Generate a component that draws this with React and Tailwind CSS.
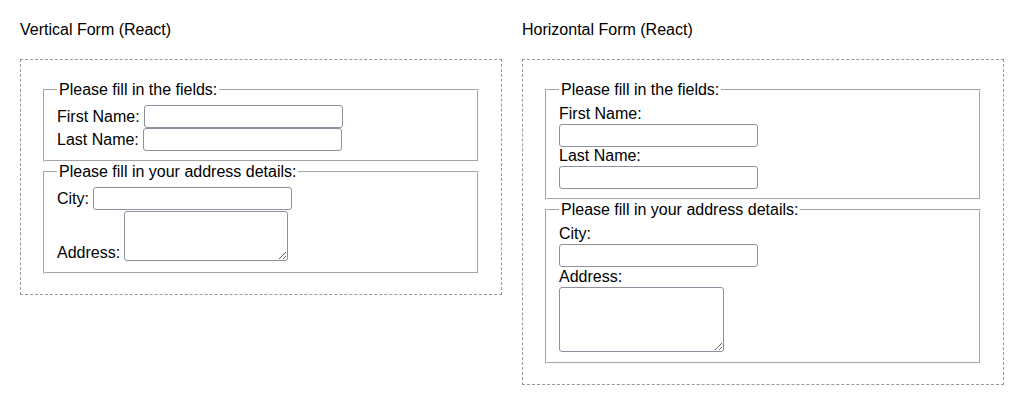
import React from "react";

const inputCls =
  "w-[199px] h-[23px] border border-[#8f8f9d] rounded-[3px] bg-white px-[2px] outline-none";
const areaCls =
  "w-[164px] border border-[#8f8f9d] rounded-[3px] bg-white px-[2px] outline-none";
const fieldsetCls =
  "mx-[2px] border-2 [border-style:groove] border-[#fafafa] px-3";

function VerticalForm() {
  return (
    <div className="border border-dashed border-[#999] p-5">
      <fieldset className={`${fieldsetCls} pb-[9px]`}>
        <legend className="px-[2px] leading-[19px]">Please fill in the fields:</legend>
        <div className="pt-[6px]">
          <div className="flex items-center h-[23px]">
            <label className="mr-[4px]">First Name:</label>
            <input type="text" className={inputCls} />
          </div>
          <div className="flex items-center h-[23px]">
            <label className="mr-[4px]">Last Name:</label>
            <input type="text" className={inputCls} />
          </div>
        </div>
      </fieldset>
      <fieldset className={`${fieldsetCls} pb-[11px]`}>
        <legend className="px-[2px] leading-[19px]">Please fill in your address details:</legend>
        <div className="pt-[6px]">
          <div className="flex items-start h-[24px]">
            <label className="mr-[4px] leading-[23px]">City:</label>
            <input type="text" className={inputCls} />
          </div>
          <div className="flex items-end">
            <label className="mr-[4px] leading-[18px] mb-[-1px]">Address:</label>
            <textarea className={`${areaCls} h-[50px] block`} />
          </div>
        </div>
      </fieldset>
    </div>
  );
}

function HorizontalForm() {
  return (
    <div className="border border-dashed border-[#999] p-5">
      <fieldset className={`${fieldsetCls} pb-[9px]`}>
        <legend className="px-[2px] leading-[19px]">Please fill in the fields:</legend>
        <div className="pt-[6px]">
          <label className="block leading-[18px]">First Name:</label>
          <input type="text" className={`${inputCls} block mt-[1px]`} />
          <label className="block leading-[18px]">Last Name:</label>
          <input type="text" className={`${inputCls} block mt-[1px]`} />
        </div>
      </fieldset>
      <fieldset className={`${fieldsetCls} pb-[10px]`}>
        <legend className="px-[2px] leading-[19px]">Please fill in your address details:</legend>
        <div className="pt-[6px]">
          <label className="block leading-[18px]">City:</label>
          <input type="text" className={`${inputCls} block mt-[1px]`} />
          <label className="block leading-[18px] mt-[1px]">Address:</label>
          <textarea className={`${areaCls} w-[165px] h-[65px] block mt-[1px]`} />
        </div>
      </fieldset>
    </div>
  );
}

export default function App() {
  return (
    <div className="min-h-[406px] bg-white p-5 flex gap-5 items-start text-base text-black font-['Liberation_Sans',Arial,sans-serif]">
      <div className="flex-1">
        <div className="leading-[18px] pt-[1px] mb-[20px]">Vertical Form (React)</div>
        <VerticalForm />
      </div>
      <div className="flex-1">
        <div className="leading-[18px] pt-[1px] mb-[20px]">Horizontal Form (React)</div>
        <HorizontalForm />
      </div>
    </div>
  );
}
